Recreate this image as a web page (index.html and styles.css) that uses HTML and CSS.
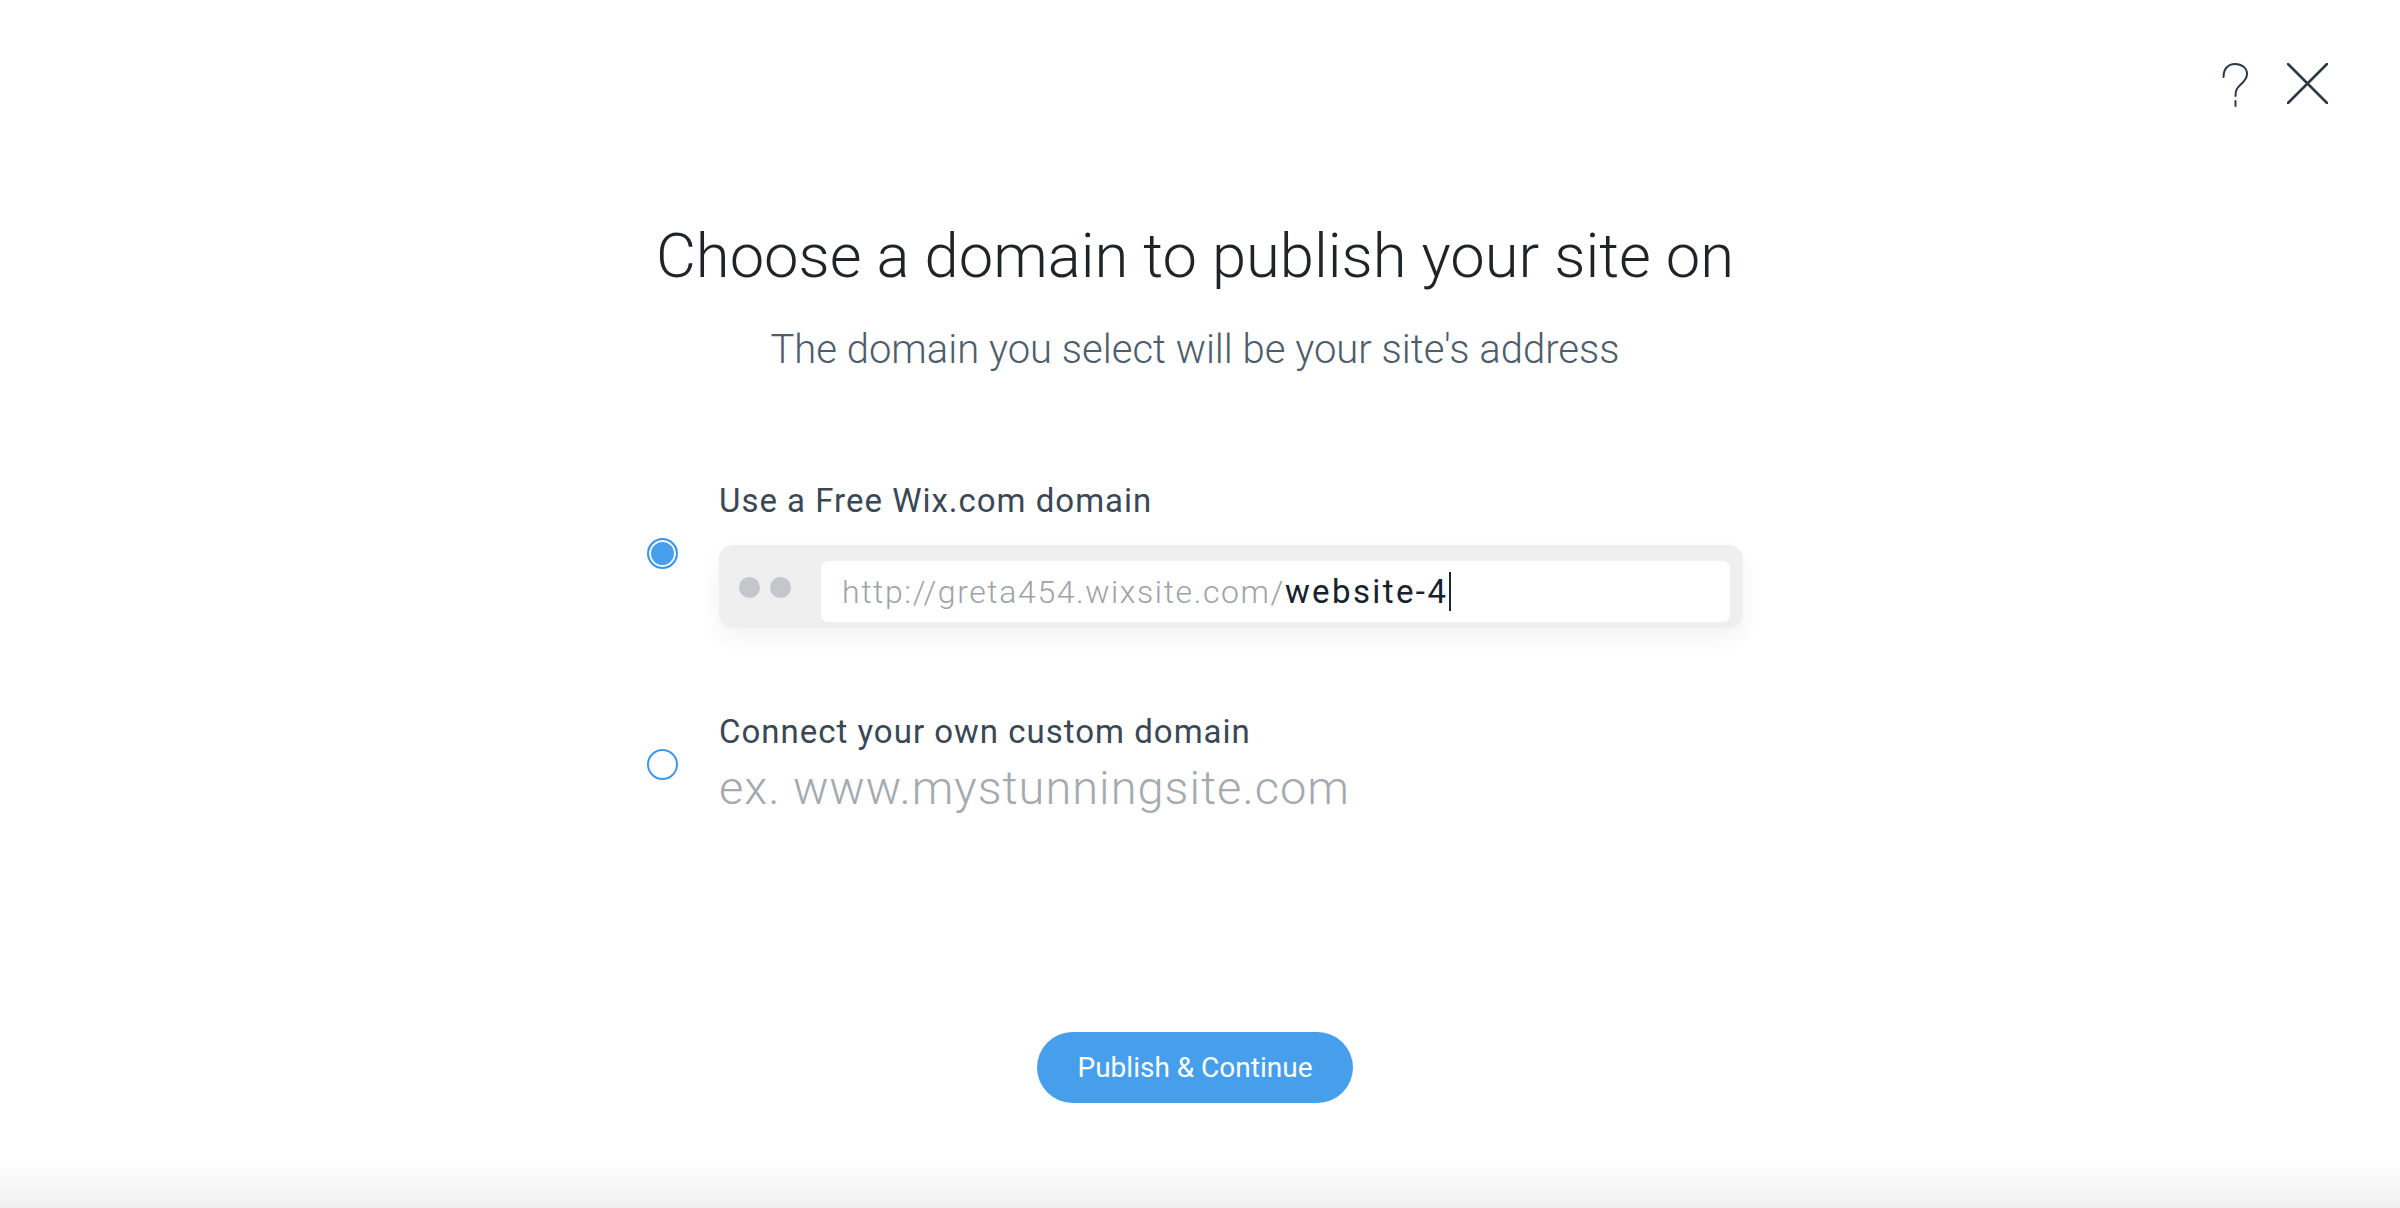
FILE: index.html
```html
<!DOCTYPE html>
<html lang="en">
<head>
  <meta charset="UTF-8">
  <title>Choose a domain</title>
  <link rel="stylesheet" href="styles.css">
</head>
<body>

<div class="topbar">
  <a href="#" class="icon-btn help-btn" title="Help">
    <svg width="26" height="44" viewBox="0 0 26 44">
      <path d="M1.5 14 C1.5 6 6 1 13 1 C20 1 25 5 25 11 C25 18 19 20 15.5 25 C14 27 13.5 29 13.5 33" />
      <path d="M13.5 38 L13.5 43" />
    </svg>
  </a>
  <a href="#" class="icon-btn close-btn" title="Close">
    <svg width="41" height="41" viewBox="0 0 41 41">
      <path d="M1 1 L40 40 M40 1 L1 40" />
    </svg>
  </a>
</div>

<div class="dialog">
  <h1>Choose a domain to publish your site on</h1>
  <p class="subtitle">The domain you select will be your site's address</p>

  <div class="options">
    <label class="option">
      <span class="radio checked"></span>
      <span class="option-body">
        <span class="option-label">Use a Free Wix.com domain</span>
        <span class="url-box">
          <span class="dots"><i></i><i></i></span>
          <span class="url-field">
            <span class="url-prefix">http://greta454.wixsite.com/</span><span class="url-name">website-4</span><span class="caret"></span>
          </span>
        </span>
      </span>
    </label>

    <label class="option">
      <span class="radio"></span>
      <span class="option-body">
        <span class="option-label">Connect your own custom domain</span>
        <span class="custom-hint">ex. www.mystunningsite.com</span>
      </span>
    </label>
  </div>

  <div class="actions">
    <button id="publishBtn">Publish &amp; Continue</button>
  </div>
</div>

</body>
</html>
```

FILE: styles.css
```css
html, body {
  height: 100%;
}
body {
  margin: 0;
  font-family: Roboto, "Liberation Sans", Arial, sans-serif;
  background: linear-gradient(#fff calc(100% - 46px), #f0f0f0);
  color: #20262b;
}
.topbar {
  display: flex;
  justify-content: flex-end;
  align-items: flex-start;
  gap: 39px;
  padding: 63px 72px 0 0;
  height: 44px;
}
.icon-btn {
  display: block;
}
.icon-btn svg {
  display: block;
  fill: none;
  stroke: #2b3a46;
  stroke-width: 2;
  stroke-linecap: round;
}
.close-btn svg {
  stroke-width: 2.6;
}
.dialog {
  width: 1096px;
  margin: 118px 0 0 calc(50% - 553px);
}
h1 {
  margin: 0;
  font-size: 61.5px;
  line-height: 62px;
  font-weight: 300;
  text-align: center;
  color: #1f2429;
}
.subtitle {
  margin: 43px 0 0;
  font-size: 40px;
  line-height: 40px;
  font-weight: 300;
  text-align: center;
  color: #4d5d6c;
}
.options {
  display: flex;
  flex-direction: column;
  gap: 86px;
  margin-top: 113px;
}
.option {
  display: flex;
  align-items: center;
  gap: 41px;
  cursor: pointer;
}
.radio {
  flex: none;
  width: 27px;
  height: 27px;
  border: 2px solid #3d97ec;
  border-radius: 50%;
  background: #fff;
  box-sizing: content-box;
}
.radio.checked {
  background: #479fec;
  box-shadow: inset 0 0 0 2px #fff;
  margin-top: -5px;
}
.option-body {
  flex: 1;
  display: flex;
  flex-direction: column;
}
.option-label {
  font-size: 33px;
  line-height: 35px;
  letter-spacing: 1px;
  color: #3a4856;
}
.url-box {
  display: flex;
  align-items: center;
  margin-top: 27px;
  padding: 16px 13px 6px 20px;
  background: #efefef;
  border-radius: 14px;
  box-shadow: 0 10px 22px rgba(0,0,0,0.05);
}
.dots {
  display: flex;
  gap: 10px;
  margin: 0 30px -4px 0;
  align-self: flex-start;
  padding-top: 16px;
}
.dots i {
  width: 21px;
  height: 21px;
  border-radius: 50%;
  background: #c3c7cb;
}
.url-field {
  flex: 1;
  display: flex;
  align-items: center;
  height: 61px;
  padding-left: 21px;
  background: #fff;
  border-radius: 7px;
  font-size: 32px;
}
.url-prefix {
  font-weight: 300;
  letter-spacing: 1.6px;
  color: #9ea3a8;
}
.url-name {
  font-size: 33px;
  letter-spacing: 2.4px;
  color: #16222e;
}
.caret {
  width: 2px;
  height: 39px;
  margin-left: 1px;
  background: #1b2733;
}
.custom-hint {
  margin-top: 11px;
  font-size: 47px;
  line-height: 55px;
  font-weight: 300;
  letter-spacing: 1px;
  color: #a4aab0;
}
.actions {
  display: flex;
  justify-content: center;
  margin-top: 217px;
}
#publishBtn {
  width: 316px;
  height: 71px;
  border: none;
  border-radius: 36px;
  background: #479fec;
  color: #fff;
  font-family: Roboto, "Liberation Sans", Arial, sans-serif;
  font-size: 28px;
  cursor: pointer;
}
```
